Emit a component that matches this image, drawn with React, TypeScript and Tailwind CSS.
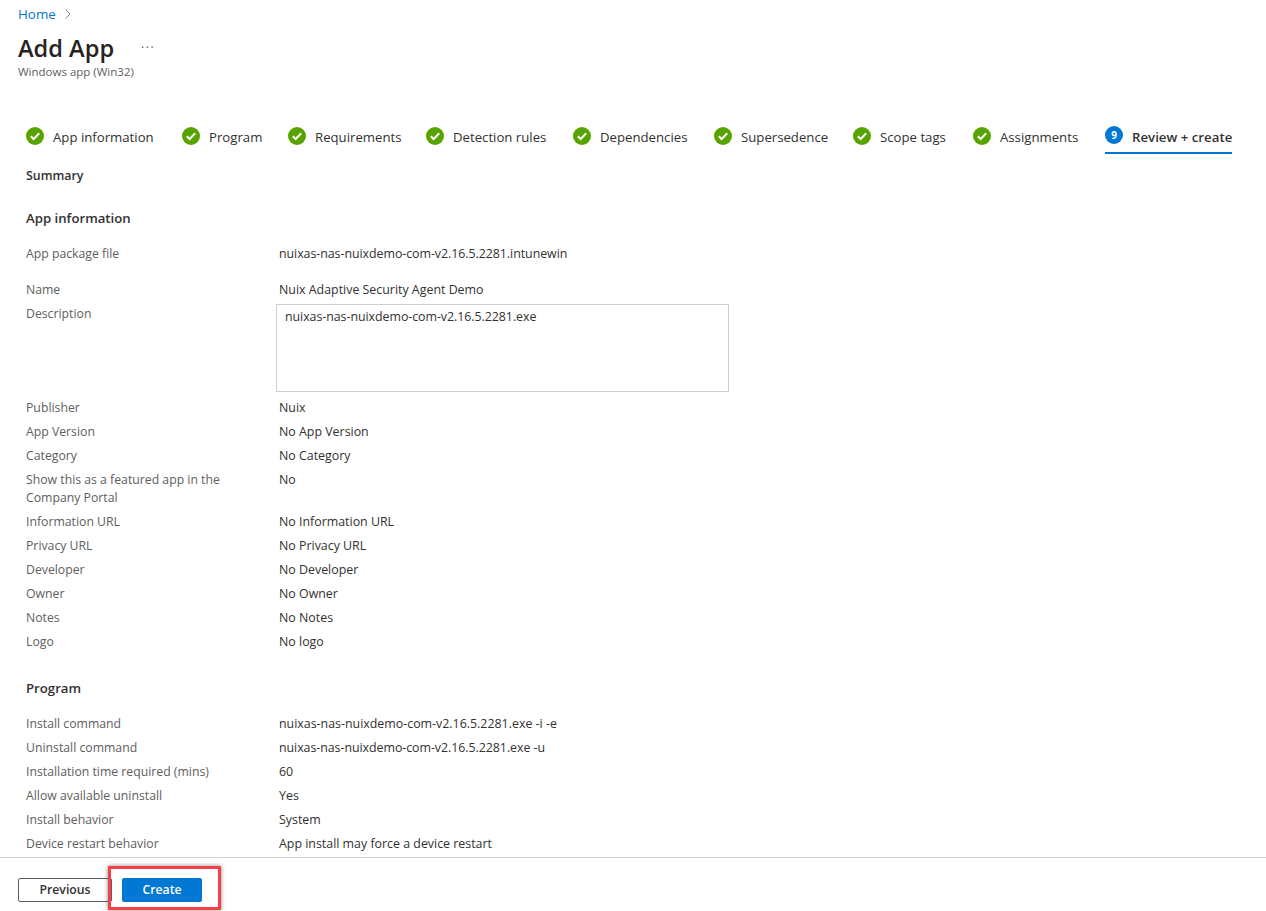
import type { ReactNode } from 'react'

const font = "font-['Open_Sans','Liberation_Sans',sans-serif]"

const tabs = [
  { label: 'App information', w: 'w-[156px]' },
  { label: 'Program', w: 'w-[106px]' },
  { label: 'Requirements', w: 'w-[138px]' },
  { label: 'Detection rules', w: 'w-[147px]' },
  { label: 'Dependencies', w: 'w-[141px]' },
  { label: 'Supersedence', w: 'w-[139px]' },
  { label: 'Scope tags', w: 'w-[120px]' },
  { label: 'Assignments', w: 'w-[132px]' },
]

function Check() {
  return (
    <svg width="18" height="18" viewBox="0 0 18 18" className="shrink-0">
      <circle cx="9" cy="9" r="9" fill="#57a300" />
      <path d="M4.8 9.3 7.6 12 13.2 6.3" fill="none" stroke="#fff" strokeWidth="2" />
    </svg>
  )
}

function Row({ label, children, tall }: { label: ReactNode; children: ReactNode; tall?: boolean }) {
  return (
    <div className={`flex leading-[18px] py-[3px] ${tall ? 'h-[42px]' : 'h-[24px]'}`}>
      <div className="w-[253px] pr-[30px] text-[12.25px] text-[#605e5c] shrink-0">{label}</div>
      <div className="text-[12.4px] text-[#323130]">{children}</div>
    </div>
  )
}

export default function App() {
  return (
    <div className={`${font} h-[911px] flex flex-col overflow-hidden bg-white text-[#323130]`}>
      <div className="flex-1 min-h-0 overflow-hidden">
        <div className="px-[18px] pt-[5px]">
          <div className="flex items-center gap-[8px] h-[18px] text-[13.4px] text-[#0078d4]">
            Home
            <svg width="8" height="10" viewBox="0 0 8 10"><path d="M1.5.5 6 5 1.5 9.5" fill="none" stroke="#8a8886" /></svg>
          </div>
          <div className="flex items-center h-[36px] mt-[7px]">
            <h1 className="text-[23.6px] font-semibold leading-[36px] text-[#252423]">Add App</h1>
            <span className="ml-[27px] mb-[1px] text-[12px] leading-none tracking-[1.5px] text-[#605e5c]">···</span>
          </div>
          <div className="text-[11.5px] leading-[16px] text-[#605e5c] -mt-[2px]">Windows app (Win32)</div>
        </div>

        <div className="flex pl-[26px] mt-[45px] h-[36px]">
          {tabs.map(t => (
            <div key={t.label} className={`${t.w} shrink-0 flex items-start gap-[9px] pt-[2px] text-[13.2px] leading-[20px] text-[#323130]`}>
              <Check />
              <span className="whitespace-nowrap">{t.label}</span>
            </div>
          ))}
          <div className="w-[127px] shrink-0 flex items-start gap-[9px] pt-[1px] h-[29px] border-b-2 border-[#0078d4] text-[13.25px] leading-[20px] font-semibold">
            <span className="w-[18px] h-[18px] rounded-full bg-[#0078d4] text-white text-[10px] font-bold leading-[18px] text-center shrink-0">9</span>
            <span className="whitespace-nowrap mt-[1px]">Review + create</span>
          </div>
        </div>

        <div className="pl-[26px]">
          <div className="text-[12.4px] font-semibold leading-[18px] mt-[6px]">Summary</div>
          <h2 className="text-[13.2px] font-semibold leading-[20px] mt-[23px]">App information</h2>
          <div className="mt-[14px]">
            <Row label="App package file"><span className="tracking-[-0.05px]">nuixas-nas-nuixdemo-com-v2.16.5.2281.intunewin</span></Row>
            <div className="h-[12px]" />
            <Row label="Name">Nuix Adaptive Security Agent Demo</Row>
            <div className="flex leading-[18px] h-[94px] pt-[2px]">
              <div className="w-[250px] shrink-0 pt-[1px] text-[12.25px] text-[#605e5c]">Description</div>
              <div className="w-[453px] h-[88px] border border-[#cfcfcf] px-[8px] py-[3px] text-[12.4px] tracking-[-0.05px] text-[#323130]">nuixas-nas-nuixdemo-com-v2.16.5.2281.exe</div>
            </div>
            <Row label="Publisher">Nuix</Row>
            <Row label="App Version">No App Version</Row>
            <Row label="Category">No Category</Row>
            <Row tall label="Show this as a featured app in the Company Portal">No</Row>
            <Row label="Information URL">No Information URL</Row>
            <Row label="Privacy URL">No Privacy URL</Row>
            <Row label="Developer">No Developer</Row>
            <Row label="Owner">No Owner</Row>
            <Row label="Notes">No Notes</Row>
            <Row label="Logo">No logo</Row>
          </div>
          <h2 className="text-[13.2px] font-semibold leading-[20px] mt-[24px]">Program</h2>
          <div className="mt-[14px]">
            <Row label="Install command">nuixas-nas-nuixdemo-com-v2.16.5.2281.exe -i -e</Row>
            <Row label="Uninstall command"><span className="tracking-[-0.05px]">nuixas-nas-nuixdemo-com-v2.16.5.2281.exe -u</span></Row>
            <Row label="Installation time required (mins)">60</Row>
            <Row label="Allow available uninstall">Yes</Row>
            <Row label="Install behavior">System</Row>
            <Row label="Device restart behavior">App install may force a device restart</Row>
          </div>
        </div>
      </div>

      <div className="h-[54px] shrink-0 border-t border-[#d2d0ce] flex items-start gap-[10px] pl-[18px] pt-[20px] relative">
        <button className="w-[94px] h-[24px] border border-[#605e5c] rounded-[2px] text-[12.25px] font-semibold text-[#323130]">Previous</button>
        <button className="w-[80px] h-[24px] rounded-[2px] bg-[#0078d4] text-white text-[12.25px] font-semibold">Create</button>
        <div className="absolute left-[108px] top-[8px] w-[113px] h-[44px] border-[3px] border-[#f5404a] shadow-[0_0_4px_rgba(0,0,0,0.5)] pointer-events-none" />
      </div>
    </div>
  )
}
